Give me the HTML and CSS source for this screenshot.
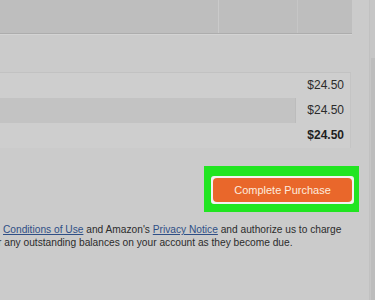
FILE: index.html
```html
<!DOCTYPE html>
<html lang="en">
<head>
    <meta charset="UTF-8">
    <meta name="viewport" content="width=device-width, initial-scale=1.0">
    <title>Review your order</title>
    <link rel="stylesheet" href="styles.css">
</head>
<body>
    <div class="page">
        <div class="main">
            <div class="header-table">
                <div class="head-cell head-wide"></div>
                <div class="head-cell head-mid"></div>
                <div class="head-cell head-last"></div>
            </div>

            <div class="totals">
                <div class="total-row">
                    <div class="label-cell"></div>
                    <div class="price-cell">$24.50</div>
                </div>
                <div class="total-row shaded">
                    <div class="label-cell"></div>
                    <div class="price-cell split">$24.50</div>
                </div>
                <div class="total-row grand">
                    <div class="label-cell"></div>
                    <div class="price-cell">$24.50</div>
                </div>
            </div>

            <div class="actions">
                <div class="highlight">
                    <div class="btn-frame">
                        <button class="btn btn-purchase">Complete Purchase</button>
                    </div>
                </div>
            </div>

            <div class="legal">
                <div class="legal-line"><a href="#">Conditions of Use</a> and Amazon's <a href="#">Privacy Notice</a> and authorize us to charge</div>
                <div class="legal-line cut">r any outstanding balances on your account as they become due.</div>
            </div>
        </div>
        <div class="scrollbar">
            <div class="scroll-thumb"></div>
        </div>
    </div>
</body>
</html>
```

FILE: styles.css
```css
* {
    margin: 0;
    padding: 0;
    box-sizing: border-box;
    font-family: 'Liberation Sans', Arial, sans-serif;
}

body {
    background-color: #cbcbcb;
    color: #2a2a2a;
    height: 300px;
    overflow: hidden;
}

.page {
    display: flex;
    height: 300px;
}

.main {
    flex: 1;
    overflow: hidden;
}

/* Top table, scrolled almost out of view */
.header-table {
    display: flex;
    width: 352px;
    height: 34px;
    background-color: #bebebe;
    border-bottom: 1px solid #adadad;
    box-shadow: 0 1px 0 #d4d4d4;
}

.head-cell {
    height: 100%;
}

.head-wide {
    width: 218px;
}

.head-mid {
    width: 79px;
    border-left: 1px solid #cacaca;
}

.head-last {
    flex: 1;
    border-left: 1px solid #c6c6c6;
}

/* Order totals */
.totals {
    width: 351px;
    margin-top: 38px;
    border-top: 1px solid #c2c2c2;
    border-right: 1px solid #c4c4c4;
}

.total-row {
    display: flex;
    height: 25px;
    align-items: stretch;
    background-color: #cecece;
}

.label-cell {
    flex: 1;
}

.price-cell {
    width: 55px;
    padding-right: 6px;
    font-size: 12px;
    text-align: right;
    line-height: 25px;
    color: #2b2b2b;
}

.shaded .label-cell {
    background-color: #c3c3c3;
}

.split {
    border-left: 1px solid #bcbcbc;
}

.grand .price-cell {
    font-weight: bold;
    color: #1e1e1e;
}

/* Purchase button */
.actions {
    display: flex;
    justify-content: flex-end;
    padding-right: 10px;
    margin-top: 18px;
}

.highlight {
    background-color: #21e521;
    padding: 10px 5px 8px 7px;
}

.btn-frame {
    background-color: #f2f2f2;
    padding: 2px;
    border-radius: 3px;
}

.btn {
    border: none;
    cursor: pointer;
}

.btn-purchase {
    display: block;
    width: 139px;
    height: 24px;
    background-color: #e9672b;
    color: #fcebdf;
    font-size: 11px;
    border-radius: 4px;
}

/* Legal text */
.legal {
    margin-top: 11px;
    font-size: 10.2px;
    line-height: 13px;
    color: #2c2c2c;
}

.legal-line {
    white-space: nowrap;
    padding-left: 3px;
}

.legal-line.cut {
    margin-left: -5px;
}

.legal a {
    color: #2f4f86;
}

/* Browser scrollbar at the right edge */
.scrollbar {
    width: 6px;
    background-color: #c6c6c6;
    border-left: 1px solid #c1c1c1;
    padding-top: 58px;
}

.scroll-thumb {
    height: 242px;
    margin-left: 1px;
    background-color: #bdbdbd;
}
```
